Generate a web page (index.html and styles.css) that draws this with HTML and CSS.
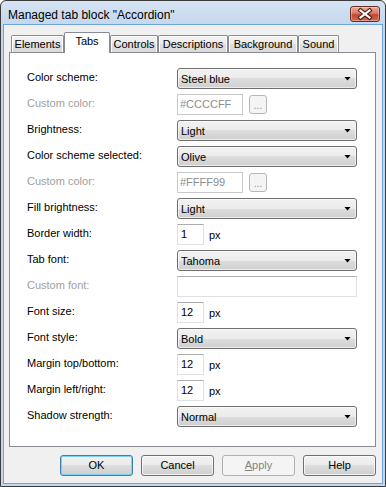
FILE: index.html
```html
<!DOCTYPE html>
<html>
<head>
<meta charset="utf-8">
<title>Managed tab block "Accordion"</title>
<link rel="stylesheet" href="styles.css">
</head>
<body>
<div class="window">
    <div class="titlebar">
        <span class="title">Managed tab block "Accordion"</span>
        <div class="close">
            <svg width="28" height="14" viewBox="0 0 28 14">
                <path d="M9.5 3.5 L18.5 10.5 M18.5 3.5 L9.5 10.5" stroke="#4a1d16" stroke-width="4.2" stroke-linecap="square" fill="none"/>
                <path d="M9.5 3.5 L18.5 10.5 M18.5 3.5 L9.5 10.5" stroke="#fff" stroke-width="2.2" stroke-linecap="square" fill="none"/>
            </svg>
        </div>
    </div>
    <div class="client">
        <div class="tabs">
            <div class="tab tab-elements">Elements</div>
            <div class="tab tab-tabs active">Tabs</div>
            <div class="tab tab-controls">Controls</div>
            <div class="tab tab-descriptions">Descriptions</div>
            <div class="tab tab-background">Background</div>
            <div class="tab tab-sound">Sound</div>
        </div>
        <div class="page">
            <div class="form">
                <div class="label">Color scheme:</div>
                <div class="combo"><span>Steel blue</span><span class="arrow"></span></div>

                <div class="label disabled">Custom color:</div>
                <div class="field">
                    <div class="textbox color disabled">#CCCCFF</div>
                    <div class="dots">...</div>
                </div>

                <div class="label">Brightness:</div>
                <div class="combo"><span>Light</span><span class="arrow"></span></div>

                <div class="label">Color scheme selected:</div>
                <div class="combo"><span>Olive</span><span class="arrow"></span></div>

                <div class="label disabled">Custom color:</div>
                <div class="field">
                    <div class="textbox color disabled">#FFFF99</div>
                    <div class="dots">...</div>
                </div>

                <div class="label">Fill brightness:</div>
                <div class="combo"><span>Light</span><span class="arrow"></span></div>

                <div class="label">Border width:</div>
                <div class="field">
                    <div class="textbox small">1</div>
                    <span class="unit">px</span>
                </div>

                <div class="label">Tab font:</div>
                <div class="combo"><span>Tahoma</span><span class="arrow"></span></div>

                <div class="label disabled">Custom font:</div>
                <div class="textbox wide"></div>

                <div class="label">Font size:</div>
                <div class="field">
                    <div class="textbox small">12</div>
                    <span class="unit">px</span>
                </div>

                <div class="label">Font style:</div>
                <div class="combo"><span>Bold</span><span class="arrow"></span></div>

                <div class="label">Margin top/bottom:</div>
                <div class="field">
                    <div class="textbox small">12</div>
                    <span class="unit">px</span>
                </div>

                <div class="label">Margin left/right:</div>
                <div class="field">
                    <div class="textbox small">12</div>
                    <span class="unit">px</span>
                </div>

                <div class="label">Shadow strength:</div>
                <div class="combo"><span>Normal</span><span class="arrow"></span></div>
            </div>
        </div>
        <div class="buttons">
            <div class="button default">OK</div>
            <div class="button">Cancel</div>
            <div class="button disabled"><u>A</u>pply</div>
            <div class="button">Help</div>
        </div>
    </div>
</div>
</body>
</html>
```

FILE: styles.css
```css
html, body {
    margin: 0;
    padding: 0;
}

body {
    font-family: "Liberation Sans", Arial, sans-serif;
    font-size: 11px;
    color: #000;
    background: #fff;
}

* {
    box-sizing: border-box;
}

.window {
    width: 386px;
    height: 487px;
    border: 1px solid #3b3b3b;
    border-radius: 6px 6px 0 0;
    background: linear-gradient(#d6e4f4, #c4d7ee 24px, #c4d7ee);
    padding: 0 3px 3px 3px;
    display: flex;
    flex-direction: column;
}

.titlebar {
    height: 24px;
    display: flex;
    justify-content: space-between;
    align-items: flex-start;
    padding: 5px 2px 0 4px;
}

.title {
    font-size: 12px;
    line-height: 16px;
    padding-top: 1px;
    color: #000;
}

.close {
    width: 30px;
    height: 16px;
    border: 1px solid #6e2b20;
    border-radius: 3px;
    background: linear-gradient(#e9a898, #d97a66 45%, #c5452e 55%, #cf6a52);
    box-shadow: inset 0 0 0 1px rgba(255, 255, 255, .35);
    display: flex;
    align-items: center;
    justify-content: center;
}

.client {
    flex: 1;
    background: #f0f0f0;
    box-shadow: 0 0 0 1px #6da5dc;
    padding: 0 6px 7px 5px;
    display: flex;
    flex-direction: column;
}

/* tab strip */
.tabs {
    height: 27px;
    display: flex;
    align-items: flex-end;
    padding-left: 2px;
}

.tab {
    height: 17px;
    border: 1px solid #898c95;
    border-bottom: none;
    border-radius: 2px 2px 0 0;
    background: linear-gradient(#f3f3f3, #ebebeb 50%, #dedede 50%, #dadada);
    box-shadow: inset 1px 1px 0 #fff, inset -1px 0 0 #fff;
    text-align: center;
    line-height: 16px;
}

.tab.active {
    height: 21px;
    margin-bottom: -1px;
    background: #fff;
    box-shadow: none;
    line-height: 16px;
    position: relative;
    z-index: 1;
}

.tab-elements { width: 53px; }
.tab-tabs { width: 46px; }
.tab-controls { width: 48px; }
.tab-descriptions { width: 70px; }
.tab-background { width: 70px; }
.tab-sound { width: 41px; }

/* page */
.page {
    flex: 1;
    background: #fff;
    border: 1px solid #898c95;
}

.form {
    display: grid;
    grid-template-columns: 150px 180px;
    grid-auto-rows: 21px;
    row-gap: 5px;
    padding: 15px 0 0 17px;
    align-items: center;
}

.label {
    align-self: start;
    padding-top: 3px;
    line-height: 13px;
}

.label.disabled {
    color: #a0a0a0;
}

.combo {
    height: 21px;
    border: 1px solid #707070;
    border-radius: 3px;
    background: linear-gradient(#f2f2f2, #ebebeb 50%, #dddddd 50%, #cfcfcf);
    box-shadow: inset 0 0 0 1px rgba(255, 255, 255, .6);
    display: flex;
    align-items: center;
    justify-content: space-between;
    padding: 0 5px 0 3px;
}

.arrow {
    width: 7px;
    height: 4px;
    background: #000;
    clip-path: polygon(0 0, 100% 0, 50% 100%);
}

.field {
    display: flex;
    align-items: center;
    gap: 6px;
    height: 21px;
}

.textbox {
    height: 21px;
    background: #fff;
    border: 1px solid #dde1e7;
    border-top-color: #abadb3;
    padding: 0 3px;
    line-height: 19px;
}

.textbox.color {
    width: 66px;
    padding-left: 2px;
}

.textbox.disabled {
    color: #8d8d8d;
    border-color: #c9c9c9;
}

.textbox.small {
    width: 27px;
}

.textbox.wide {
    width: 180px;
}

.unit {
    margin-left: -1px;
}

.dots {
    width: 18px;
    height: 19px;
    border: 1px solid #b5b8ba;
    border-radius: 3px;
    background: #f4f4f4;
    color: #8b8b8b;
    text-align: center;
    line-height: 20px;
    font-size: 10px;
}

/* dialog buttons */
.buttons {
    margin-top: 8px;
    display: flex;
    justify-content: flex-end;
    gap: 8px;
}

.button {
    width: 73px;
    height: 21px;
    border: 1px solid #707070;
    border-radius: 3px;
    background: linear-gradient(#f2f2f2, #ebebeb 50%, #dddddd 50%, #cfcfcf);
    box-shadow: inset 0 0 0 1px rgba(255, 255, 255, .7);
    text-align: center;
    line-height: 19px;
}

.button.default {
    border-color: #3c7fb1;
    box-shadow: inset 0 0 0 1px #7dd0f6;
}

.button.disabled {
    border-color: #adb2b5;
    background: #f4f4f4;
    box-shadow: none;
    color: #838383;
}
```
